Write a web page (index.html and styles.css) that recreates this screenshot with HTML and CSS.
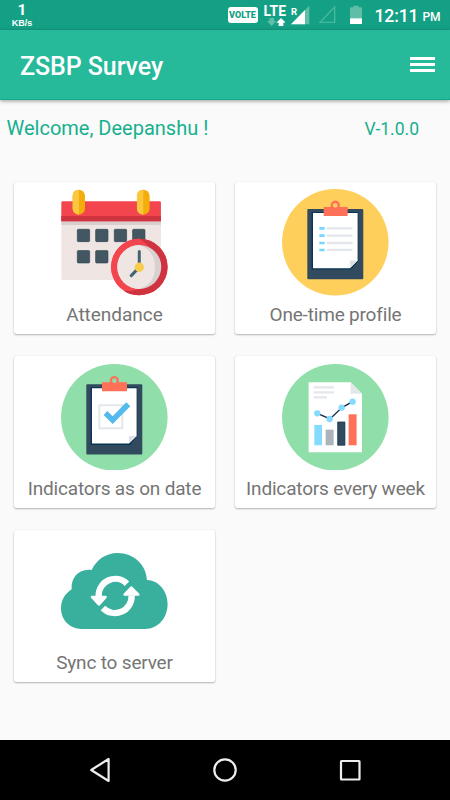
FILE: index.html
```html
<!DOCTYPE html>
<html lang="en">
<head>
<meta charset="utf-8">
<title>ZSBP Survey</title>
<link rel="stylesheet" href="styles.css">
</head>
<body>
<div class="screen">
  <div class="status-bar">
    <div class="net-speed"><span class="net-value">1</span><span class="net-unit">KB/s</span></div>
    <div class="status-right">
      <span class="volte">VOLTE</span>
      <div class="lte">
        <span class="lte-text">LTE</span>
        <svg class="arrows" width="18" height="8" viewBox="0 0 54 24"><path d="M7 0h14v9h7L14 24 0 9h7z" fill="#5fbda8"/><path d="M42 0L56 14h-7v10H35V14h-7z" fill="#fff"/></svg>
      </div>
      <svg class="signal" width="19" height="20" viewBox="0 0 57 60"><path d="M55 2v56H0z" fill="#5fbda8"/><path d="M42 15v43H0z" fill="#fff"/></svg>
      <span class="roaming">R</span>
      <svg class="signal-empty" width="18" height="19" viewBox="0 0 54 57"><path d="M50 6v46H6z" fill="none" stroke="#4ab89f" stroke-width="4"/></svg>
      <svg class="battery" width="12" height="20" viewBox="0 0 36 60"><path d="M10 2h16v5h8q2 0 2 2v31H0V9q0-2 2-2h8z" fill="#5fbda8"/><path d="M0 40h36v15q0 2-2 2H2q-2 0-2-2z" fill="#fff"/></svg>
      <span class="clock">12:11</span><span class="ampm">PM</span>
    </div>
  </div>
  <header class="app-bar">
    <h1 class="title">ZSBP Survey</h1>
    <div class="menu"><i></i><i></i><i></i></div>
  </header>
  <main class="content">
    <div class="welcome"><span class="greeting">Welcome, Deepanshu !</span><span class="version">V-1.0.0</span></div>
    <div class="cards">
      <div class="card">
        <svg class="icon" viewBox="0 0 320 320">
          <rect x="1" y="60" width="299" height="213" rx="4" fill="#efe6e4"/>
          <path d="M1 96h299v12H1z" fill="#d9cfcf"/>
          <path d="M5 37h291q4 0 4 4v56H1V41q0-4 4-4z" fill="#f2454e"/>
          <path d="M1 81h299v16H1z" fill="#cf3340"/>
          <rect x="35" y="2" width="37" height="75" rx="18.500" fill="#f4ae0c"/><path d="M54 2v75q-19-1-19-19V20Q35 3 54 2z" fill="#fbc73f"/>
          <rect x="228" y="2" width="38" height="75" rx="18.500" fill="#f4ae0c"/><path d="M247 2v75q-19-1-19-19V20q0-17 19-18z" fill="#fbc73f"/>
          <g fill="#435763" stroke="#2d4450" stroke-width="2"><rect x="49" y="121" width="37" height="37" rx="3"/><rect x="104" y="121" width="37" height="37" rx="3"/><rect x="160" y="121" width="37" height="37" rx="3"/><rect x="215" y="121" width="37" height="37" rx="3"/><rect x="49" y="185" width="37" height="37" rx="3"/><rect x="104" y="185" width="37" height="37" rx="3"/></g>
          <circle cx="235" cy="234" r="85" fill="#f2454e"/>
          <path d="M235 149a85 85 0 0 1 0 170q-28 0-45-13 85-10 85-80 0-48-40-77z" fill="#cf3340"/>
          <path d="M235 149a85 85 0 0 0-55 149q14 10 32 8 72-14 72-80 0-48-49-77z" fill="#f2454e"/>
          <circle cx="235" cy="234" r="66" fill="#d9d0d0"/>
          <path d="M235 168a66 66 0 0 0 0 132q47-16 47-66t-47-66z" fill="#efe6e4"/>
          <path d="M235 188v46M211 260l20-21" stroke="#426571" stroke-width="9" stroke-linecap="round"/>
          <circle cx="235" cy="235" r="14" fill="#f9cc4c"/>
        </svg>
        <span class="label attendance">Attendance</span>
      </div>
      <div class="card">
        <svg class="icon" viewBox="0 0 320 320">
          <circle cx="160" cy="160" r="160" fill="#ffcf5c"/>
          <rect x="76" y="60" width="168" height="211" rx="3" fill="#324a5e"/>
          <path d="M89 69h140v147l-22 26H89z" fill="#063350"/>
          <path d="M93 72h134v143l-23 23H93z" fill="#fff"/><path d="M204 215h23l-23 23z" fill="#dce1e8"/>
          <path d="M125 54h22a14 14 0 1 1 26 0h24v27h-72z" fill="#ff7058"/><circle cx="160" cy="49" r="7" fill="#ffcf5c"/>
          <path d="M112 118h16m-16 22h16m-16 22h16m-16 21h16" stroke="#77d4fb" stroke-width="8"/>
          <path d="M137 118h72m-72 22h72m-72 22h72m-72 21h72" stroke="#e3e7ec" stroke-width="7" stroke-linecap="round"/>
        </svg>
        <span class="label profile">One-time profile</span>
      </div>
      <div class="card">
        <svg class="icon" viewBox="0 0 320 320">
          <circle cx="160" cy="160" r="160" fill="#90dfaa"/>
          <rect x="76" y="61" width="168" height="211" rx="3" fill="#324a5e"/>
          <path d="M89 70h140v147l-22 26H89z" fill="#063350"/>
          <path d="M93 73h134v143l-23 23H93z" fill="#fff"/><path d="M204 216h23l-23 23z" fill="#dce1e8"/>
          <path d="M123 55h24a14 14 0 1 1 26 0h25v27h-75z" fill="#ff7058"/><circle cx="160" cy="50" r="7" fill="#90dfaa"/>
          <path d="M115 124h69v69h-69z" fill="none" stroke="#e3e7ec" stroke-width="6"/>
          <path d="M128 153l11-12 16 16 41-42 12 12-53 53z" fill="#54b9ed"/>
        </svg>
        <span class="label on-date">Indicators as on date</span>
      </div>
      <div class="card">
        <svg class="icon" viewBox="0 0 320 320">
          <circle cx="160" cy="160" r="160" fill="#90dfaa"/>
          <path d="M80 55h126l34 34v176H80z" fill="#fff"/><path d="M206 55l34 34h-34z" fill="#e3e7ec"/>
          <path d="M95 70h61m-61 15h61m-61 15h40" stroke="#e3e7ec" stroke-width="7"/>
          <path d="M106 148l38 17 36-34 33-19" fill="none" stroke="#172d47" stroke-width="4"/>
          <g fill="#84dbff"><circle cx="106" cy="148" r="9.500"/><circle cx="143" cy="165" r="9.500"/><circle cx="179" cy="131" r="9.500"/><circle cx="212" cy="113" r="9.500"/><path d="M97 183h23v61H97z"/></g>
          <path d="M131 197h24v47h-24z" fill="#acb3ba"/><path d="M167 174h22v70h-22z" fill="#324a5e" stroke="#172d47" stroke-width="2"/><path d="M200 151h24v93h-24z" fill="#ff7058"/>
        </svg>
        <span class="label every-week">Indicators every week</span>
      </div>
      <div class="card">
        <svg class="icon" viewBox="0 -2 320 320">
          <path d="M62 271C27 271 0 245 0 209c0-25 12-43 32-57-3-36 23-63 60-58 15-31 43-51 78-51 48 0 86 35 88 81 35 1 62 33 62 72 0 43-29 75-68 75z" fill="#38b09d"/>
          <path d="M113 172A50 50 0 0 1 198 135M212 171A50 50 0 0 1 126 208" fill="none" stroke="#fff" stroke-width="19"/>
          <path d="M92 171h43q5 2 2 6l-20 23q-3 3-6 0l-21-23q-3-4 2-6zM190 171h43q5-2 2-6l-21-21q-3-3-6 0l-20 21q-3 4 2 6z" fill="#fff"/>
        </svg>
        <span class="label sync">Sync to server</span>
      </div>
    </div>
  </main>
  <nav class="nav-bar">
    <svg width="24" height="26" viewBox="0 0 24 26"><path d="M20.600 2v22L3.200 13z"/></svg>
    <svg width="26" height="26" viewBox="0 0 26 26"><circle cx="13" cy="13" r="10.700"/></svg>
    <svg width="24" height="26" viewBox="0 0 24 26"><rect x="3" y="4" width="18.500" height="18.500" rx=".5"/></svg>
  </nav>
</div>
</body>
</html>
```

FILE: styles.css
```css
* { box-sizing: border-box; }
body { margin: 0; font-family: Roboto, "Liberation Sans", sans-serif; }
svg { display: block; flex: none; }
.screen { width: 450px; height: 800px; display: flex; flex-direction: column; background: #fafafa; overflow: hidden; }
.status-bar { height: 30px; flex: none; background: #14a085; color: #fff; display: flex; padding-left: 11px; }
.net-speed { width: 22px; flex: none; display: flex; flex-direction: column; align-items: center; gap: 3px; padding-top: 4px; font-weight: 700; white-space: nowrap; }
.net-value { font-size: 15.500px; line-height: 12.500px; }
.net-unit { font: 700 9px/7px "Liberation Sans", sans-serif; }
.status-right { display: flex; position: relative; margin-left: 194.500px; white-space: nowrap; }
.volte { width: 30px; height: 16px; margin-top: 7px; border-radius: 3px; background: #fff; color: #14a085; font-size: 9px; line-height: 16px; font-weight: 900; text-align: center; }
.lte { width: 22px; margin: 5px 0 0 6px; }
.lte-text { display: block; font-size: 14px; line-height: 13px; font-weight: 700; }
.arrows { margin: 0 0 0 3px; }
.signal { margin: 5px 0 0 5px; }
.roaming { position: absolute; left: 63.500px; top: 7px; font-size: 9.500px; line-height: 9px; font-weight: 700; }
.signal-empty { margin: 5px 0 0 8px; }
.battery { margin: 5px 0 0 14px; }
.clock { font-size: 17.700px; letter-spacing: -.2px; line-height: 33px; font-weight: 500; margin-left: 13px; }
.ampm { font-size: 12px; line-height: 35px; font-weight: 500; margin-left: 4px; }
.app-bar { height: 70px; flex: none; background: #26b99a; border-bottom: 1px solid #14a98a; box-shadow: 0 1px 4px rgba(0,0,0,.4); display: flex; justify-content: space-between; padding: 0 15px 0 20px; color: #fff; }
.title { margin: 0; font-size: 25px; line-height: 74px; font-weight: 500; letter-spacing: -.08px; }
.menu { width: 25px; padding-top: 27px; display: flex; flex-direction: column; gap: 3px; }
.menu i { height: 3px; background: #fff; }
.content { flex: 1; }
.welcome { height: 81.700px; display: flex; justify-content: space-between; padding: 0 31px 0 6.500px; color: #16b08f; }
.greeting { font-size: 20px; line-height: 57px; }
.version { font-size: 17.500px; line-height: 59px; }
.cards { display: grid; grid-template-columns: 201px 201px; grid-auto-rows: 152px; gap: 22.400px 20px; margin-left: 14px; }
.card { background: #fff; border-radius: 2.500px; box-shadow: 0 1px 2px rgba(0,0,0,.28), 0 0 1px rgba(0,0,0,.12); display: flex; flex-direction: column; align-items: center; padding-top: 7.500px; }
.icon { width: 106.600px; height: 106.600px; }
.label { font-size: 19px; letter-spacing: -.18px; line-height: 24px; margin-top: 6.800px; color: #757575; white-space: nowrap; }
.attendance { letter-spacing: -.02px; }
.nav-bar { height: 60px; flex: none; background: #000; display: flex; justify-content: space-between; align-items: center; padding: 0 88px; }
.nav-bar svg { fill: none; stroke: #eee; stroke-width: 2.200; stroke-linejoin: round; }
```
